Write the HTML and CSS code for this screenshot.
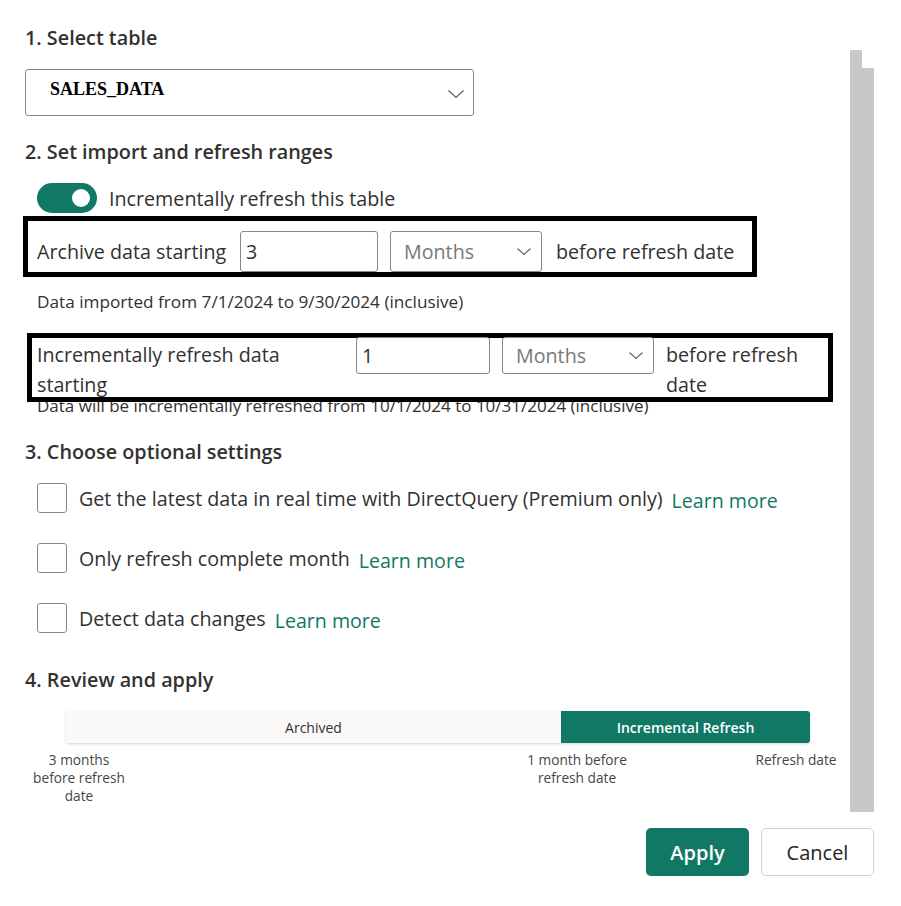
FILE: index.html
```html
<!DOCTYPE html>
<html lang="en">
<head>
<meta charset="utf-8">
<title>Incremental refresh</title>
<link rel="stylesheet" href="styles.css">
</head>
<body>
<div class="dialog">
  <div class="top">
    <div class="content">
      <h2 class="heading h1">1. Select table</h2>
      <div class="table-select">
        <span class="table-name">SALES_DATA</span>
        <svg class="chev big" viewBox="0 0 16 8" width="16" height="8"><polyline points="0.5,0.5 8,7.5 15.5,0.5" fill="none" stroke="#605e5c" stroke-width="1.2"/></svg>
      </div>

      <h2 class="heading h2">2. Set import and refresh ranges</h2>
      <div class="toggle-row">
        <span class="toggle"><span class="knob"></span></span>
        <span class="label">Incrementally refresh this table</span>
      </div>

      <div class="box box-archive">
        <span class="label lbl-archive">Archive data starting</span>
        <div class="num">3</div>
        <div class="unit"><span>Months</span><svg class="chev" viewBox="0 0 14 7" width="14" height="7"><polyline points="0.5,0.5 7,6.5 13.5,0.5" fill="none" stroke="#605e5c" stroke-width="1.1"/></svg></div>
        <span class="label">before refresh date</span>
      </div>
      <p class="note note1">Data imported from 7/1/2024 to 9/30/2024 (inclusive)</p>

      <div class="box box-incr">
        <span class="label lbl-incr">Incrementally refresh data starting</span>
        <div class="num">1</div>
        <div class="unit"><span>Months</span><svg class="chev" viewBox="0 0 14 7" width="14" height="7"><polyline points="0.5,0.5 7,6.5 13.5,0.5" fill="none" stroke="#605e5c" stroke-width="1.1"/></svg></div>
        <span class="label lbl-before">before refresh date</span>
      </div>
      <p class="note note2">Data will be incrementally refreshed from 10/1/2024 to 10/31/2024 (inclusive)</p>

      <h2 class="heading h3">3. Choose optional settings</h2>
      <div class="options">
        <div class="option"><span class="check"></span><span class="label">Get the latest data in real time with DirectQuery (Premium only)</span><a class="learn">Learn more</a></div>
        <div class="option"><span class="check"></span><span class="label">Only refresh complete month</span><a class="learn">Learn more</a></div>
        <div class="option"><span class="check"></span><span class="label">Detect data changes</span><a class="learn">Learn more</a></div>
      </div>

      <h2 class="heading h4">4. Review and apply</h2>
      <div class="bar">
        <div class="seg archived">Archived</div>
        <div class="seg incremental">Incremental Refresh</div>
      </div>
      <div class="ticks">
        <div class="tick t1">3 months<br>before refresh<br>date</div>
        <div class="tick t2">1 month before<br>refresh date</div>
        <div class="tick t3">Refresh date</div>
      </div>
    </div>
    <div class="scrollbar">
      <div class="sb-left"></div>
      <div class="sb-right"></div>
    </div>
  </div>
  <div class="footer">
    <button class="btn primary">Apply</button>
    <button class="btn secondary">Cancel</button>
  </div>
</div>
</body>
</html>
```
FILE: styles.css
```css
* { box-sizing: border-box; }
html, body { margin: 0; padding: 0; background: #ffffff; }
body {
  font-family: "Open Sans", "Noto Sans", sans-serif;
  color: #323130;
  width: 901px;
  height: 906px;
  overflow: hidden;
}
.dialog { display: flex; flex-direction: column; }
.top { display: flex; height: 812px; }
.content { width: 850px; padding: 24px 0 0 25px; }

.heading {
  margin: 0;
  font-size: 19.8px;
  font-weight: 600;
  line-height: 28px;
  color: #323130;
}
.h2 { margin-top: 22px; }
.h3 { margin-top: 21px; }
.h4 { margin-top: 33px; }

.table-select {
  margin-top: 17px;
  width: 449px;
  height: 47px;
  border: 1px solid #8a8886;
  border-radius: 3px;
  display: flex;
  align-items: center;
  justify-content: space-between;
  padding: 0 9px 0 24px;
}
.table-name {
  font-family: "Liberation Serif", serif;
  font-weight: bold;
  font-size: 18px;
  color: #000;
  margin-top: -7px;
}
.chev.big { margin-top: 2px; }

.label { font-size: 19.7px; line-height: 30px; color: #323130; padding-top: 1px; }

.toggle-row {
  margin-top: 17px;
  margin-left: 12px;
  display: flex;
  align-items: center;
  gap: 12px;
  height: 30px;
}
.toggle {
  width: 60px;
  height: 30px;
  border-radius: 15px;
  background: #117865;
  display: flex;
  align-items: center;
  justify-content: flex-end;
  padding-right: 7px;
}
.knob { width: 18px; height: 18px; border-radius: 50%; background: #fff; }

.box {
  position: relative;
  z-index: 1;
  border: 5px solid #000;
  display: flex;
}
.box-archive {
  margin-top: 3px;
  margin-left: -2px;
  width: 734px;
  height: 61px;
  padding: 10px 0 0 9px;
  align-items: center;
  gap: 12px;
}
.lbl-archive { width: 191px; white-space: nowrap; }
.box-archive .num, .box-archive .unit { height: 41px; }
.num {
  width: 138px;
  border: 1px solid #8a8886;
  border-radius: 3px;
  font-size: 19.7px;
  padding-left: 5px;
  display: flex;
  align-items: center;
  color: #323130;
}
.unit {
  width: 152px;
  border: 1px solid #8a8886;
  border-radius: 3px;
  display: flex;
  align-items: center;
  justify-content: space-between;
  padding: 0 10px 0 13px;
  font-size: 19.7px;
  color: #797775;
}
.box-archive .unit + .label { margin-left: 2px; white-space: nowrap; }

.note {
  margin: 0;
  line-height: 22px;
  color: #323130;
  padding-left: 12px;
}
.note1 { margin-top: 14px; font-size: 17.2px; }

.box-incr {
  margin-top: 20px;
  margin-left: 2px;
  width: 806px;
  height: 69px;
  padding: 0 0 0 5px;
  align-items: flex-start;
  gap: 12px;
}
.lbl-incr { width: 307px; padding-top: 2px; }
.box-incr .num { width: 134px; height: 37px; margin-top: -1px; }
.box-incr .unit { width: 152px; height: 37px; margin-top: -1px; }
.lbl-before { flex: 1; padding-top: 2px; padding-right: 20px; }
.note2 { margin-top: -7px; font-size: 17px; position: relative; z-index: 0; }

.options {
  margin-top: 17px;
  margin-left: 12px;
  display: flex;
  flex-direction: column;
  gap: 30px;
}
.option { display: flex; align-items: center; height: 30px; }
.check {
  width: 30px;
  height: 30px;
  border: 1px solid #8a8886;
  border-radius: 3px;
  margin-right: 12px;
  flex: none;
}
.learn {
  font-size: 19.6px;
  line-height: 30px;
  color: #117865;
  margin-left: 9px;
  margin-top: 5px;
}

.bar {
  margin-top: 17px;
  margin-left: 41px;
  width: 744px;
  height: 32px;
  display: flex;
  font-size: 14px;
  box-shadow: 0 1px 3px rgba(0,0,0,0.18);
  border-radius: 2px;
}
.seg { display: flex; align-items: center; justify-content: center; }
.archived { width: 495px; background: #faf9f8; color: #323130; border-radius: 2px 0 0 2px; }
.incremental { flex: 1; background: #117865; color: #fff; font-weight: 600; border-radius: 0 3px 3px 0; }

.ticks {
  margin-top: 8px;
  margin-left: -1px;
  display: flex;
  font-size: 13.7px;
  line-height: 18px;
  color: #484644;
}
.tick { width: 110px; text-align: center; flex: none; }
.t2 { margin-left: 388px; }
.t3 { margin-left: 109px; }

.scrollbar { display: flex; width: 24px; }
.sb-left { width: 12px; margin-top: 50px; background: #c8c8c8; }
.sb-right { width: 12px; margin-top: 68px; background: #c8c8c8; }

.footer {
  margin-top: 16px;
  display: flex;
  justify-content: flex-end;
  gap: 12px;
  padding-right: 27px;
}
.btn {
  height: 48px;
  border-radius: 5px;
  font-family: "Open Sans", "Noto Sans", sans-serif;
  font-size: 20px;
  padding: 0;
  cursor: pointer;
}
.primary { width: 103px; background: #117865; color: #fff; border: none; font-weight: 600; }
.secondary { width: 113px; background: #fff; color: #242424; border: 1px solid #d1d1d1; }
```
